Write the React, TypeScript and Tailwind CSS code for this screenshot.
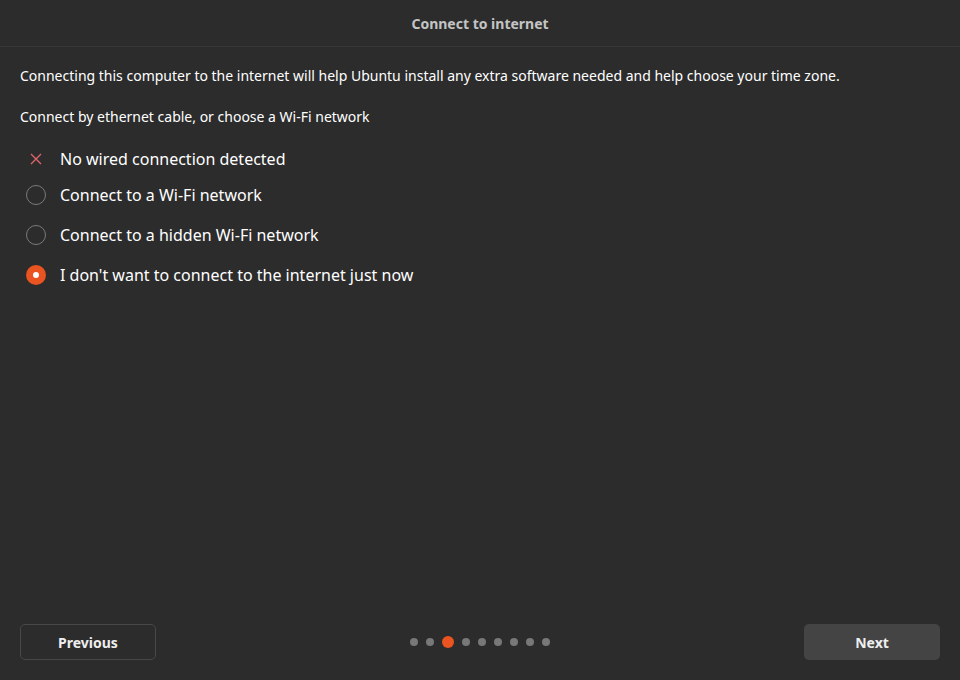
import { useState } from "react";

const options = [
  { id: "wifi", label: "Connect to a Wi-Fi network" },
  { id: "hidden", label: "Connect to a hidden Wi-Fi network" },
  { id: "none", label: "I don't want to connect to the internet just now" },
];

const Radio = ({ checked }: { checked: boolean }) =>
  checked ? (
    <span className="w-5 h-5 rounded-full bg-[#e95420] flex items-center justify-center">
      <span className="w-[6px] h-[6px] rounded-full bg-white" />
    </span>
  ) : (
    <span className="w-5 h-5 rounded-full border border-[#7c7c7c]" />
  );

export default function App() {
  const [selected, setSelected] = useState("none");

  return (
    <div
      className="w-[960px] h-[680px] bg-[#2c2c2c] text-white flex flex-col"
      style={{ fontFamily: "'Noto Sans', sans-serif" }}
    >
      <header className="h-[47px] border-b border-[#373737] flex items-center justify-center shrink-0">
        <h1 className="text-[14px] font-bold text-[#c4c4c4]">Connect to internet</h1>
      </header>

      <main className="flex-1 px-5 pt-[19px]">
        <p className="text-[14px] leading-5">
          Connecting this computer to the internet will help Ubuntu install any extra software needed and help choose your time zone.
        </p>
        <p className="text-[14px] leading-5 mt-[21px]">Connect by ethernet cable, or choose a Wi-Fi network</p>

        <div className="mt-[16px] flex flex-col">
          <div className="h-[32px] flex items-center gap-[14px] pl-[6px]">
            <span className="w-5 h-5 flex items-center justify-center">
              <svg width="12" height="12" viewBox="0 0 12 12" fill="none" stroke="#e0676b" strokeWidth="1.3">
                <path d="M1 1 L11 11 M11 1 L1 11" />
              </svg>
            </span>
            <span className="text-[16px]">No wired connection detected</span>
          </div>
          {options.map((o) => (
            <button
              key={o.id}
              onClick={() => setSelected(o.id)}
              className="h-[40px] flex items-center gap-[14px] pl-[6px] text-left"
            >
              <Radio checked={selected === o.id} />
              <span className="text-[16px]">{o.label}</span>
            </button>
          ))}
        </div>
      </main>

      <footer className="h-[56px] shrink-0 px-5 flex items-start justify-between">
        <button className="w-[136px] h-[36px] rounded-[5px] border border-[#484848] text-[14px] font-bold text-[#eeeeee]">
          Previous
        </button>
        <div className="h-[36px] flex items-center gap-[8px]">
          {Array.from({ length: 9 }).map((_, i) =>
            i === 2 ? (
              <span key={i} className="w-[12px] h-[12px] rounded-full bg-[#e95420]" />
            ) : (
              <span key={i} className="w-[8px] h-[8px] rounded-full bg-[#787878]" />
            )
          )}
        </div>
        <button className="w-[136px] h-[36px] rounded-[5px] bg-[#444444] text-[14px] font-bold text-[#eeeeee]">
          Next
        </button>
      </footer>
    </div>
  );
}
